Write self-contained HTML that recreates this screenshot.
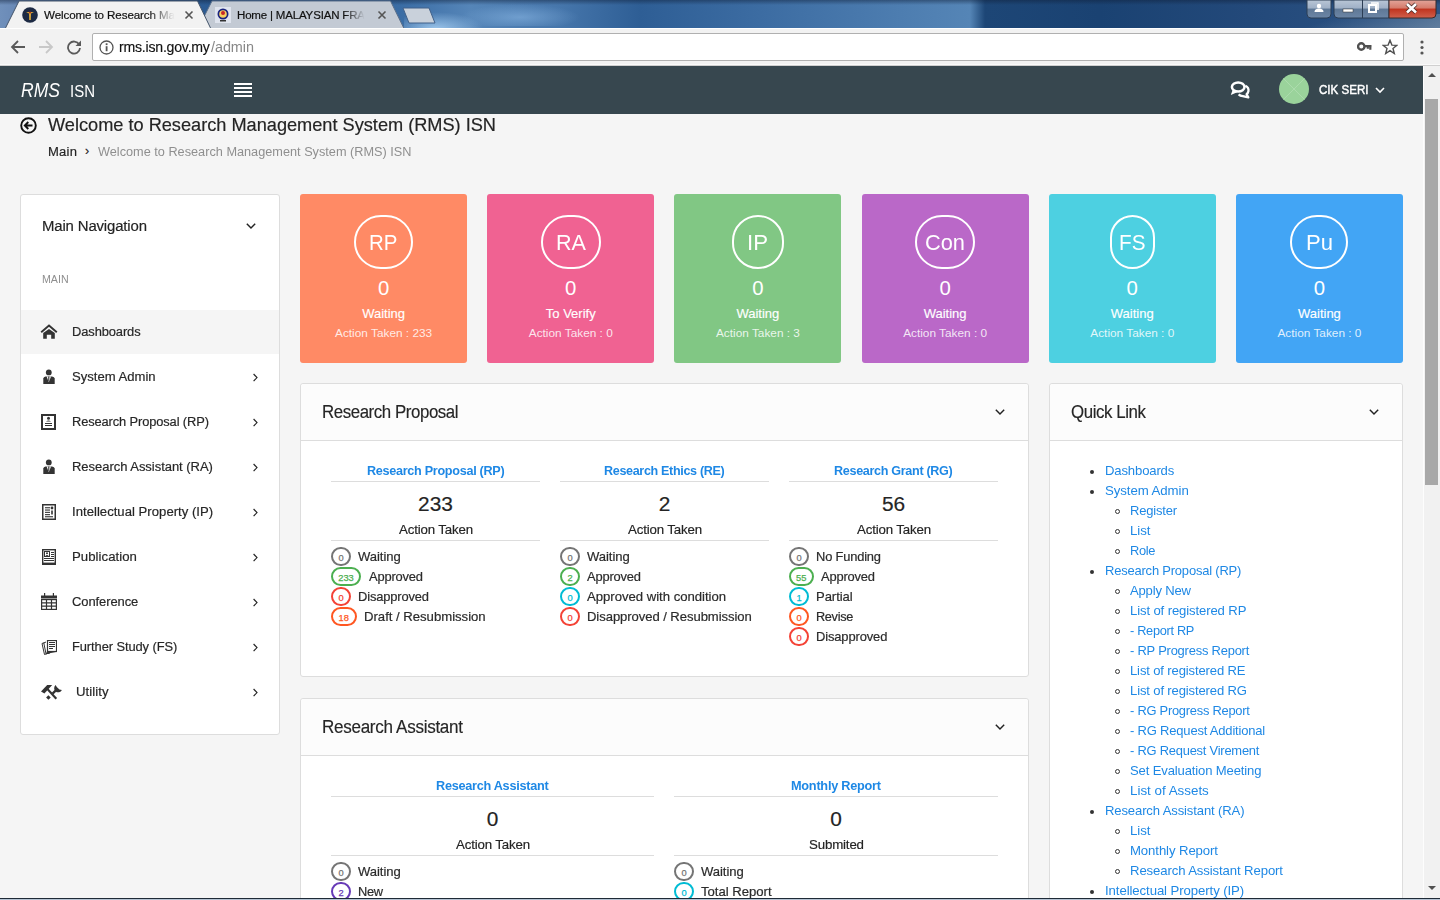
<!DOCTYPE html>
<html><head><meta charset="utf-8"><style>
*{margin:0;padding:0;box-sizing:border-box}
html,body{width:1440px;height:900px;overflow:hidden;background:#f5f5f5;font-family:"Liberation Sans",sans-serif}
.t{position:absolute;white-space:nowrap}
.r{position:absolute}
</style></head><body>
<div class="r" style="left:0px;top:0px;width:1440px;height:29px;background:linear-gradient(90deg,#7090bb 0px,#6585b3 25px,#3a68a0 120px,#2b5a92 210px,#3a6ca4 400px,#5585b8 470px,#4676ab 560px,#2e5e95 640px,#3c6ca2 760px,#4d7db0 900px,#5585b6 970px,#1d4676 985px,#1a4272 1100px,#23497a 1250px,#2e5585 1440px)"></div>
<div class="r" style="left:404px;top:12px;width:80px;height:17px;background:radial-gradient(ellipse at 40% 100%,rgba(170,210,245,.85) 0%,rgba(150,190,230,0) 70%)"></div>
<div class="r" style="left:460px;top:4px;width:120px;height:22px;background:radial-gradient(ellipse at 50% 60%,rgba(140,185,230,.55) 0%,rgba(140,185,230,0) 70%)"></div>
<div class="r" style="left:1250px;top:14px;width:190px;height:15px;background:linear-gradient(160deg,rgba(120,145,170,0) 40%,rgba(120,145,170,.7) 100%)"></div>
<div class="r" style="left:0px;top:0px;width:1440px;height:29px;background:linear-gradient(180deg,rgba(15,30,55,.45) 0px,rgba(0,0,0,0) 5px)"></div>
<svg class="r" style="left:400px;top:6px" width="40" height="20" viewBox="0 0 40 20"><path d="M3 2 L29 2 L35 17 L9 17 Z" fill="#c9d1db" stroke="#41618a" stroke-width="1"/></svg>
<svg class="r" style="left:195px;top:0px" width="215" height="29" viewBox="0 0 215 29"><path d="M3 28.5 L17 1 L195.5 1 L209 28.5 Z" fill="#c3cad4" stroke="#5a6f8a" stroke-width="1"/></svg>
<svg class="r" style="left:0px;top:0px" width="215" height="29" viewBox="0 0 215 29"><path d="M5 29 L19 1 L197.5 1 L211 29 Z" fill="#f2f2f2" stroke="#44556b" stroke-width="1"/></svg>
<svg class="r" style="left:22px;top:7px" width="16" height="16" viewBox="0 0 16 16"><circle cx="8" cy="8" r="7.8" fill="#1d2a44"/><path d="M4 5 L12 5 L9 6.5 L8.8 13 L7.2 13 L7 6.5 Z" fill="#d9a83a"/><circle cx="8" cy="5.5" r="1" fill="#b03020"/></svg>
<div class="t" style="left:44.00px;top:7.80px;font-size:11.83px;line-height:15px;color:#111;letter-spacing:-0.118px;transform:scaleX(0.9821);transform-origin:0 0;-webkit-text-stroke:0.2px #111;-webkit-mask-image:linear-gradient(90deg,#000 80%,transparent 100%)">Welcome to Research Ma</div>
<svg class="r" style="left:184px;top:10px" width="10" height="10" viewBox="0 0 10 10"><path d="M1.5 1.5 L8.5 8.5 M8.5 1.5 L1.5 8.5" stroke="#555" stroke-width="1.6"/></svg>
<svg class="r" style="left:215px;top:7px" width="16" height="16" viewBox="0 0 16 16"><rect x="0" y="0" width="16" height="16" fill="#dfe4ee"/><circle cx="8" cy="7" r="5.5" fill="#1a237e"/><circle cx="8" cy="7" r="3.8" fill="#f5d060"/><circle cx="8" cy="6" r="2" fill="#c62828"/><rect x="5" y="13" width="6" height="1.5" fill="#333"/></svg>
<div class="t" style="left:237.00px;top:7.80px;font-size:11.83px;line-height:15px;color:#111;letter-spacing:-0.189px;transform:scaleX(0.9741);transform-origin:0 0;-webkit-text-stroke:0.2px #111;-webkit-mask-image:linear-gradient(90deg,#000 85%,transparent 100%)">Home | MALAYSIAN FRA</div>
<svg class="r" style="left:377px;top:10px" width="10" height="10" viewBox="0 0 10 10"><path d="M1.5 1.5 L8.5 8.5 M8.5 1.5 L1.5 8.5" stroke="#555" stroke-width="1.6"/></svg>
<svg class="r" style="left:1305px;top:0px" width="135" height="20" viewBox="0 0 135 20"><defs><linearGradient id="wb" x1="0" y1="0" x2="0" y2="1"><stop offset="0" stop-color="#b9c6d6"/><stop offset=".45" stop-color="#9fb0c6"/><stop offset=".5" stop-color="#5f7896"/><stop offset="1" stop-color="#6c86a6"/></linearGradient><linearGradient id="wc" x1="0" y1="0" x2="0" y2="1"><stop offset="0" stop-color="#e3a59a"/><stop offset=".45" stop-color="#d57b6b"/><stop offset=".5" stop-color="#c0341f"/><stop offset="1" stop-color="#d0604c"/></linearGradient></defs><path d="M2 0 L2 14 Q2 18 6 18 L22 18 Q26 18 26 14 L26 0 Z" fill="url(#wb)" stroke="#2c3e55" stroke-width="1"/><path d="M29 0 L29 14 Q29 18 33 18 L84 18 L84 0 Z" fill="url(#wb)" stroke="#2c3e55" stroke-width="1"/><path d="M84 0 L84 18 L127 18 Q131 18 131 14 L131 0 Z" fill="url(#wc)" stroke="#3a2a2a" stroke-width="1"/><line x1="57.5" y1="0" x2="57.5" y2="18" stroke="#2c3e55" stroke-width="1"/><circle cx="14" cy="6" r="2.2" fill="#fff"/><path d="M9.5 12 Q9.5 8.5 14 8.5 Q18.5 8.5 18.5 12 Z" fill="#fff"/><rect x="38" y="9" width="10" height="3" fill="#fff" stroke="#333" stroke-width=".5"/><rect x="64" y="5" width="7" height="7" fill="none" stroke="#fff" stroke-width="2"/><path d="M66 3 L73 3 L73 10" fill="none" stroke="#fff" stroke-width="1.5"/><path d="M102 4 L111 12.5 M111 4 L102 12.5" stroke="#4a2a25" stroke-width="4.2"/><path d="M102 4 L111 12.5 M111 4 L102 12.5" stroke="#fff" stroke-width="2.6"/></svg>
<div class="r" style="left:0px;top:28px;width:1440px;height:37px;background:#f2f2f2;border-top:1px solid #fff"></div>
<div class="r" style="left:0px;top:64px;width:1440px;height:1px;background:#fafafa"></div>
<div class="r" style="left:0px;top:65px;width:1440px;height:1px;background:#d0d0d0"></div>
<svg class="r" style="left:10px;top:39px" width="16" height="16" viewBox="0 0 16 16"><path d="M15 8 L2 8 M8 2 L2 8 L8 14" fill="none" stroke="#5a5a5a" stroke-width="1.8"/></svg>
<svg class="r" style="left:38px;top:39px" width="16" height="16" viewBox="0 0 16 16"><path d="M1 8 L14 8 M8 2 L14 8 L8 14" fill="none" stroke="#c8c8c8" stroke-width="1.8"/></svg>
<svg class="r" style="left:66px;top:39px" width="16" height="16" viewBox="0 0 16 16"><path d="M13.2 5.5 A6 6 0 1 0 14 9" fill="none" stroke="#5a5a5a" stroke-width="1.8"/><path d="M15 1.5 L15 7 L9.5 7 Z" fill="#5a5a5a"/></svg>
<div class="r" style="left:92px;top:33px;width:1312px;height:28px;background:#fff;border:1px solid #b0b0b0;border-radius:2px"></div>
<svg class="r" style="left:99px;top:40px" width="15" height="15" viewBox="0 0 15 15"><circle cx="7.5" cy="7.5" r="6.5" fill="none" stroke="#555" stroke-width="1.3"/><rect x="6.7" y="6.2" width="1.8" height="5" fill="#555"/><rect x="6.7" y="3.3" width="1.8" height="1.8" fill="#555"/></svg>
<div class="t" style="left:119.00px;top:38.00px;font-size:14.55px;line-height:18px;color:#111;letter-spacing:-0.230px;transform:scaleX(0.9701);transform-origin:0 0;-webkit-text-stroke:0.15px #111;">rms.isn.gov.my</div>
<div class="t" style="left:211.00px;top:38.00px;font-size:14.55px;line-height:18px;color:#888;letter-spacing:-0.069px;transform:scaleX(0.9921);transform-origin:0 0;">/admin</div>
<svg class="r" style="left:1357px;top:41px" width="16" height="12" viewBox="0 0 16 12"><circle cx="4.3" cy="5.5" r="3.2" fill="none" stroke="#505050" stroke-width="2.4"/><path d="M7.5 5.2 L14.5 5.2 M13.3 5 L13.3 8.8 M10.8 5 L10.8 7.8" stroke="#505050" stroke-width="2.2"/></svg>
<svg class="r" style="left:1382px;top:39px" width="16" height="16" viewBox="0 0 16 16"><path d="M8 1.3 L9.9 6.1 L14.9 6.3 L11 9.5 L12.3 14.5 L8 11.7 L3.7 14.5 L5 9.5 L1.1 6.3 L6.1 6.1 Z" fill="none" stroke="#505050" stroke-width="1.4" stroke-linejoin="miter"/></svg>
<svg class="r" style="left:1418px;top:40px" width="8" height="16" viewBox="0 0 8 16"><circle cx="4" cy="2" r="1.6" fill="#555"/><circle cx="4" cy="7.5" r="1.6" fill="#555"/><circle cx="4" cy="13" r="1.6" fill="#555"/></svg>
<div class="r" style="left:0px;top:66px;width:1423px;height:48px;background:#37474f"></div>
<div class="t" style="left:21.00px;top:77.50px;font-size:19.4px;line-height:25px;color:#fff;font-style:italic;transform:scaleX(0.9050);transform-origin:0 0;">RMS</div>
<div class="t" style="left:69.50px;top:81.00px;font-size:16.88px;line-height:21px;color:#fff;transform:scaleX(0.8889);transform-origin:0 0;">ISN</div>
<div class="r" style="left:234px;top:83px;width:18px;height:2px;background:#fff"></div>
<div class="r" style="left:234px;top:87px;width:18px;height:2px;background:#fff"></div>
<div class="r" style="left:234px;top:91px;width:18px;height:2px;background:#fff"></div>
<div class="r" style="left:234px;top:95px;width:18px;height:2px;background:#fff"></div>
<svg class="r" style="left:1229px;top:80px" width="22" height="20" viewBox="0 0 22 20"><ellipse cx="9.2" cy="7" rx="6.3" ry="4.6" fill="none" stroke="#fff" stroke-width="2.5"/><path d="M3.6 10 L1.8 15 L8.2 12.2 Z" fill="#fff"/><path d="M16.3 5.8 C18.8 7 19.8 9.3 19.4 11.3 C19.1 12.8 18.3 13.8 17.6 14.3 L19.3 17.4 L13.8 16.2 C12 15.9 10.6 15.2 9.6 14.3" fill="none" stroke="#fff" stroke-width="2.3" stroke-linejoin="round"/></svg>
<svg class="r" style="left:1279px;top:74px" width="30" height="30" viewBox="0 0 30 30"><circle cx="15" cy="15" r="15" fill="#9ad39b"/><path d="M4.4 4.4 L25.6 25.6 M25.6 4.4 L4.4 25.6" stroke="#b5e0b5" stroke-width=".7"/></svg>
<div class="t" style="left:1319.00px;top:81.50px;font-size:12.71px;line-height:16px;color:#fff;transform:scaleX(0.9109);transform-origin:0 0;-webkit-text-stroke:0.45px #fff;">CIK SERI</div>
<svg class="r" style="left:1374px;top:86px" width="12" height="8" viewBox="0 0 12 8"><path d="M2 2 L6 6 L10 2" fill="none" stroke="#fff" stroke-width="1.6"/></svg>
<div class="r" style="left:1423px;top:66px;width:17px;height:832px;background:#f1f1f1;border-left:1px solid #fdfdfd"></div>
<svg class="r" style="left:1426px;top:70px" width="12" height="9" viewBox="0 0 12 9"><path d="M2 7 L6 3 L10 7 Z" fill="#505050"/></svg>
<div class="r" style="left:1425px;top:99px;width:13px;height:386px;background:#a8a8a8"></div>
<svg class="r" style="left:1426px;top:884px" width="12" height="9" viewBox="0 0 12 9"><path d="M2 2 L6 6 L10 2 Z" fill="#505050"/></svg>
<svg class="r" style="left:20px;top:117px" width="17" height="17" viewBox="0 0 17 17"><circle cx="8.5" cy="8.5" r="7.3" fill="none" stroke="#111" stroke-width="1.9"/><path d="M12.5 8.5 L5 8.5 M8.3 5 L4.8 8.5 L8.3 12" fill="none" stroke="#111" stroke-width="1.9"/></svg>
<div class="t" style="left:48.30px;top:113.00px;font-size:18.24px;line-height:23px;color:#242424;letter-spacing:-0.017px;transform:scaleX(0.9982);transform-origin:0 0;-webkit-text-stroke:0.18px #242424;">Welcome to Research Management System (RMS) ISN</div>
<div class="t" style="left:48.00px;top:143.50px;font-size:12.71px;line-height:16px;color:#242424;letter-spacing:0.238px;transform:scaleX(1.0267);transform-origin:0 0;-webkit-text-stroke:0.18px #242424;">Main</div>
<div class="t" style="left:85.00px;top:143.00px;font-size:12.61px;line-height:16px;color:#242424;-webkit-text-stroke:0.18px #242424;">›</div>
<div class="t" style="left:97.60px;top:143.50px;font-size:12.71px;line-height:16px;color:#8f8f8f;letter-spacing:0.003px;transform:scaleX(1.0005);transform-origin:0 0;">Welcome to Research Management System (RMS) ISN</div>
<div class="r" style="left:20px;top:194px;width:260px;height:541px;background:#fff;border:1px solid #ddd;border-radius:3px"></div>
<div class="t" style="left:41.70px;top:216.20px;font-size:15.23px;line-height:19px;color:#242424;letter-spacing:-0.151px;transform:scaleX(0.9810);transform-origin:0 0;-webkit-text-stroke:0.18px #242424;">Main Navigation</div>
<svg class="r" style="left:244px;top:221px" width="14" height="10" viewBox="0 0 14 10"><path d="M2.8 2.8 L7 7 L11.2 2.8" fill="none" stroke="#222" stroke-width="1.45"/></svg>
<div class="t" style="left:41.50px;top:272.00px;font-size:11.45px;line-height:14px;color:#8f8f8f;transform:scaleX(0.9303);transform-origin:0 0;">MAIN</div>
<div class="r" style="left:21px;top:310px;width:258px;height:44px;background:#f5f5f5"></div>
<div class="t" style="left:72.40px;top:323.30px;font-size:13.09px;line-height:17px;color:#242424;letter-spacing:-0.106px;transform:scaleX(0.9867);transform-origin:0 0;-webkit-text-stroke:0.2px #333;">Dashboards</div>
<div class="t" style="left:72.40px;top:368.30px;font-size:13.09px;line-height:17px;color:#242424;letter-spacing:0.003px;transform:scaleX(1.0004);transform-origin:0 0;-webkit-text-stroke:0.2px #333;">System Admin</div>
<svg class="r" style="left:251px;top:372.3px" width="8" height="11" viewBox="0 0 8 11"><path d="M2.6 2 L6 5.6 L2.6 9.2" fill="none" stroke="#222" stroke-width="1.15"/></svg>
<div class="t" style="left:72.40px;top:413.30px;font-size:13.09px;line-height:17px;color:#242424;letter-spacing:-0.117px;transform:scaleX(0.9830);transform-origin:0 0;-webkit-text-stroke:0.2px #333;">Research Proposal (RP)</div>
<svg class="r" style="left:251px;top:417.3px" width="8" height="11" viewBox="0 0 8 11"><path d="M2.6 2 L6 5.6 L2.6 9.2" fill="none" stroke="#222" stroke-width="1.15"/></svg>
<div class="t" style="left:72.30px;top:458.30px;font-size:13.09px;line-height:17px;color:#242424;letter-spacing:-0.036px;transform:scaleX(0.9945);transform-origin:0 0;-webkit-text-stroke:0.2px #333;">Research Assistant (RA)</div>
<svg class="r" style="left:251px;top:462.3px" width="8" height="11" viewBox="0 0 8 11"><path d="M2.6 2 L6 5.6 L2.6 9.2" fill="none" stroke="#222" stroke-width="1.15"/></svg>
<div class="t" style="left:72.30px;top:503.30px;font-size:13.09px;line-height:17px;color:#242424;letter-spacing:0.018px;transform:scaleX(1.0031);transform-origin:0 0;-webkit-text-stroke:0.2px #333;">Intellectual Property (IP)</div>
<svg class="r" style="left:251px;top:507.29999999999995px" width="8" height="11" viewBox="0 0 8 11"><path d="M2.6 2 L6 5.6 L2.6 9.2" fill="none" stroke="#222" stroke-width="1.15"/></svg>
<div class="t" style="left:72.30px;top:548.30px;font-size:13.09px;line-height:17px;color:#242424;letter-spacing:0.048px;transform:scaleX(1.0076);transform-origin:0 0;-webkit-text-stroke:0.2px #333;">Publication</div>
<svg class="r" style="left:251px;top:552.3px" width="8" height="11" viewBox="0 0 8 11"><path d="M2.6 2 L6 5.6 L2.6 9.2" fill="none" stroke="#222" stroke-width="1.15"/></svg>
<div class="t" style="left:72.30px;top:593.30px;font-size:13.09px;line-height:17px;color:#242424;letter-spacing:-0.077px;transform:scaleX(0.9899);transform-origin:0 0;-webkit-text-stroke:0.2px #333;">Conference</div>
<svg class="r" style="left:251px;top:597.3px" width="8" height="11" viewBox="0 0 8 11"><path d="M2.6 2 L6 5.6 L2.6 9.2" fill="none" stroke="#222" stroke-width="1.15"/></svg>
<div class="t" style="left:72.30px;top:638.30px;font-size:13.09px;line-height:17px;color:#242424;letter-spacing:-0.091px;transform:scaleX(0.9859);transform-origin:0 0;-webkit-text-stroke:0.2px #333;">Further Study (FS)</div>
<svg class="r" style="left:251px;top:642.3px" width="8" height="11" viewBox="0 0 8 11"><path d="M2.6 2 L6 5.6 L2.6 9.2" fill="none" stroke="#222" stroke-width="1.15"/></svg>
<div class="t" style="left:76.30px;top:683.30px;font-size:13.09px;line-height:17px;color:#242424;letter-spacing:0.059px;transform:scaleX(1.0112);transform-origin:0 0;-webkit-text-stroke:0.2px #333;">Utility</div>
<svg class="r" style="left:251px;top:687.3px" width="8" height="11" viewBox="0 0 8 11"><path d="M2.6 2 L6 5.6 L2.6 9.2" fill="none" stroke="#222" stroke-width="1.15"/></svg>
<svg class="r" style="left:40px;top:324px" width="18" height="16" viewBox="0 0 18 16"><path d="M1.2 8.2 L9 1.6 L16.8 8.2" fill="none" stroke="#333" stroke-width="1.9" stroke-linejoin="miter"/><path d="M3.2 9 L9 4.9 L14.8 9 L14.8 14.7 L11.2 14.7 L11.2 10.8 L6.8 10.8 L6.8 14.7 L3.2 14.7 Z" fill="#333"/></svg>
<svg class="r" style="left:43px;top:368.5px" width="12" height="15" viewBox="0 0 12 15"><circle cx="5.8" cy="3.4" r="2.9" fill="#333"/><path d="M0.3 15 L0.3 9.6 Q0.5 7.6 2.5 7.4 L9.1 7.4 Q11.5 7.6 11.7 9.6 L11.7 15 Z" fill="#333"/><path d="M3.6 7.4 L5.8 13.2 L8 7.4 Z" fill="#fff"/><path d="M5.2 7.4 L6.4 7.4 L6.3 11.8 L5.8 12.6 L5.3 11.8 Z" fill="#333"/></svg>
<svg class="r" style="left:43px;top:458.5px" width="12" height="15" viewBox="0 0 12 15"><circle cx="5.8" cy="3.4" r="2.9" fill="#333"/><path d="M0.3 15 L0.3 9.6 Q0.5 7.6 2.5 7.4 L9.1 7.4 Q11.5 7.6 11.7 9.6 L11.7 15 Z" fill="#333"/><path d="M3.6 7.4 L5.8 13.2 L8 7.4 Z" fill="#fff"/><path d="M5.2 7.4 L6.4 7.4 L6.3 11.8 L5.8 12.6 L5.3 11.8 Z" fill="#333"/></svg>
<svg class="r" style="left:41px;top:414px" width="15" height="16" viewBox="0 0 15 16"><rect x="1" y="1" width="13" height="14" fill="none" stroke="#333" stroke-width="2"/><circle cx="7.5" cy="4.3" r="1.5" fill="#333"/><path d="M5 7.6 Q7.5 5.2 10 7.6 Z" fill="#333"/><rect x="4" y="9" width="7" height="1" fill="#333"/><rect x="4" y="11" width="7" height="1" fill="#333"/></svg>
<svg class="r" style="left:42px;top:504px" width="14" height="16" viewBox="0 0 14 16"><rect x="0.75" y="0.75" width="12.5" height="14.5" fill="none" stroke="#333" stroke-width="1.5"/><rect x="3" y="3.2" width="5" height="1.1" fill="#333"/><rect x="3" y="5.5" width="5" height="1.1" fill="#333"/><rect x="3" y="7.8" width="5" height="1.1" fill="#333"/><rect x="3" y="10.1" width="5" height="1.1" fill="#333"/><rect x="3" y="12.2" width="8" height="1.1" fill="#333"/><circle cx="10" cy="4" r="1.4" fill="#333"/><rect x="9.2" y="6.5" width="1.6" height="4" fill="#333"/></svg>
<svg class="r" style="left:42px;top:549px" width="14" height="16" viewBox="0 0 14 16"><rect x="0" y="0" width="14" height="1.4" fill="#333"/><rect x="0" y="0" width="1.4" height="16" fill="#333"/><rect x="12.6" y="0" width="1.4" height="16" fill="#333"/><rect x="0" y="13.6" width="14" height="2.4" fill="#333"/><rect x="2.5" y="2.5" width="5" height="5" fill="none" stroke="#333" stroke-width="1"/><circle cx="5" cy="4.3" r="1" fill="#333"/><path d="M3.3 7 Q5 5.2 6.7 7 Z" fill="#333"/><rect x="9" y="3" width="3" height="1" fill="#333"/><rect x="9" y="5" width="3" height="1" fill="#333"/><rect x="9" y="7" width="3" height="1" fill="#333"/><rect x="2" y="9" width="10" height="1" fill="#333"/><rect x="2" y="11" width="10" height="1" fill="#333"/></svg>
<svg class="r" style="left:41px;top:593px" width="16" height="17" viewBox="0 0 16 17"><rect x="0" y="2.5" width="16" height="3" fill="#333"/><rect x="3" y="0" width="1.2" height="4" fill="#333"/><rect x="11.8" y="0" width="1.2" height="4" fill="#333"/><rect x="0.6" y="6.6" width="14.8" height="9.8" fill="none" stroke="#333" stroke-width="1.2"/><path d="M0.6 9.8 L15.4 9.8 M0.6 13.1 L15.4 13.1 M5.5 6.6 L5.5 16.4 M10.5 6.6 L10.5 16.4" stroke="#333" stroke-width="1.2"/></svg>
<svg class="r" style="left:41px;top:640px" width="16" height="15" viewBox="0 0 16 15"><path d="M3.5 2.5 L1 3.5 L3.5 14.5 L8 13" fill="none" stroke="#333" stroke-width="1"/><path d="M5 2 L2.8 3 L5 13.8 L9 13" fill="none" stroke="#333" stroke-width="1"/><rect x="6" y="0" width="10" height="12" fill="#fff"/><rect x="6.5" y="0.5" width="9" height="11" fill="none" stroke="#333" stroke-width="1.2"/><rect x="8" y="2" width="6" height="1" fill="#333"/><rect x="8" y="4" width="6" height="1" fill="#333"/><rect x="8" y="6" width="6" height="1" fill="#333"/><rect x="8" y="8" width="4" height="1" fill="#333"/><path d="M6 11.5 L4.8 14 L15 12 Z" fill="#333"/></svg>
<svg class="r" style="left:36px;top:678px" width="30" height="28" viewBox="0 0 30 28"><path d="M5 13.4 L11.2 7.1 L16.2 7.1 L8.4 15.4 Z" fill="#333"/><path d="M11.2 10.8 L20.3 20.8" stroke="#333" stroke-width="2.1"/><path d="M19.6 7.1 A4.1 4.1 0 1 0 25.9 12.1 L23.4 11.4 L20.8 8.9 Z" fill="#333"/><path d="M19.8 12.4 L16.6 15.6" stroke="#333" stroke-width="2.3"/><path d="M12.4 17.2 L14.7 19.5 L12.4 21.8 L10.1 19.5 Z" fill="#333"/></svg>
<div class="r" style="left:300.0px;top:194px;width:167.17px;height:169px;background:#ff8a65;border-radius:3px"></div>
<div class="r" style="left:354.08px;top:215px;width:59px;height:54px;border:2px solid #fff;border-radius:100px"></div>
<div class="t" style="left:369.38px;top:228.00px;font-size:22.31px;line-height:29px;color:#fff;transform:scaleX(0.9166);transform-origin:0 0;">RP</div>
<div class="t" style="left:377.92px;top:275.00px;font-size:20.37px;line-height:26px;color:#fff;">0</div>
<div class="t" style="left:362.14px;top:305.80px;font-size:13.0px;line-height:16px;color:#fff;-webkit-text-stroke:0.15px #fff;">Waiting</div>
<div class="t" style="left:335.04px;top:325.50px;font-size:11.83px;line-height:15px;color:rgba(255,255,255,.85);">Action Taken : 233</div>
<div class="r" style="left:487.17px;top:194px;width:167.17px;height:169px;background:#f06292;border-radius:3px"></div>
<div class="r" style="left:540.75px;top:215px;width:60px;height:54px;border:2px solid #fff;border-radius:100px"></div>
<div class="t" style="left:555.75px;top:228.00px;font-size:22.31px;line-height:29px;color:#fff;transform:scaleX(0.9682);transform-origin:0 0;">RA</div>
<div class="t" style="left:565.09px;top:275.00px;font-size:20.37px;line-height:26px;color:#fff;">0</div>
<div class="t" style="left:545.82px;top:305.80px;font-size:13.0px;line-height:16px;color:#fff;-webkit-text-stroke:0.15px #fff;">To Verify</div>
<div class="t" style="left:528.79px;top:325.50px;font-size:11.83px;line-height:15px;color:rgba(255,255,255,.85);">Action Taken : 0</div>
<div class="r" style="left:674.34px;top:194px;width:167.17px;height:169px;background:#81c784;border-radius:3px"></div>
<div class="r" style="left:731.9200000000001px;top:215px;width:52px;height:54px;border:2px solid #fff;border-radius:100px"></div>
<div class="t" style="left:747.42px;top:228.00px;font-size:22.31px;line-height:29px;color:#fff;transform:scaleX(0.9970);transform-origin:0 0;">IP</div>
<div class="t" style="left:752.26px;top:275.00px;font-size:20.37px;line-height:26px;color:#fff;">0</div>
<div class="t" style="left:736.48px;top:305.80px;font-size:13.0px;line-height:16px;color:#fff;-webkit-text-stroke:0.15px #fff;">Waiting</div>
<div class="t" style="left:715.96px;top:325.50px;font-size:11.83px;line-height:15px;color:rgba(255,255,255,.85);">Action Taken : 3</div>
<div class="r" style="left:861.51px;top:194px;width:167.17px;height:169px;background:#ba68c8;border-radius:3px"></div>
<div class="r" style="left:915.09px;top:215px;width:60px;height:54px;border:2px solid #fff;border-radius:100px"></div>
<div class="t" style="left:925.09px;top:228.00px;font-size:22.31px;line-height:29px;color:#fff;transform:scaleX(0.9775);transform-origin:0 0;">Con</div>
<div class="t" style="left:939.43px;top:275.00px;font-size:20.37px;line-height:26px;color:#fff;">0</div>
<div class="t" style="left:923.65px;top:305.80px;font-size:13.0px;line-height:16px;color:#fff;-webkit-text-stroke:0.15px #fff;">Waiting</div>
<div class="t" style="left:903.13px;top:325.50px;font-size:11.83px;line-height:15px;color:rgba(255,255,255,.85);">Action Taken : 0</div>
<div class="r" style="left:1048.68px;top:194px;width:167.17px;height:169px;background:#4dd0e1;border-radius:3px"></div>
<div class="r" style="left:1109.51px;top:215px;width:45.5px;height:54px;border:2px solid #fff;border-radius:100px"></div>
<div class="t" style="left:1119.01px;top:228.00px;font-size:22.31px;line-height:29px;color:#fff;transform:scaleX(0.9298);transform-origin:0 0;">FS</div>
<div class="t" style="left:1126.60px;top:275.00px;font-size:20.37px;line-height:26px;color:#fff;">0</div>
<div class="t" style="left:1110.82px;top:305.80px;font-size:13.0px;line-height:16px;color:#fff;-webkit-text-stroke:0.15px #fff;">Waiting</div>
<div class="t" style="left:1090.30px;top:325.50px;font-size:11.83px;line-height:15px;color:rgba(255,255,255,.85);">Action Taken : 0</div>
<div class="r" style="left:1235.85px;top:194px;width:167.17px;height:169px;background:#42a5f5;border-radius:3px"></div>
<div class="r" style="left:1290.4299999999998px;top:215px;width:58px;height:54px;border:2px solid #fff;border-radius:100px"></div>
<div class="t" style="left:1305.93px;top:228.00px;font-size:22.31px;line-height:29px;color:#fff;transform:scaleX(0.9897);transform-origin:0 0;">Pu</div>
<div class="t" style="left:1313.77px;top:275.00px;font-size:20.37px;line-height:26px;color:#fff;">0</div>
<div class="t" style="left:1297.99px;top:305.80px;font-size:13.0px;line-height:16px;color:#fff;-webkit-text-stroke:0.15px #fff;">Waiting</div>
<div class="t" style="left:1277.47px;top:325.50px;font-size:11.83px;line-height:15px;color:rgba(255,255,255,.85);">Action Taken : 0</div>
<div class="r" style="left:300px;top:383px;width:729px;height:294px;background:#fff;border:1px solid #ddd;border-radius:3px"></div>
<div class="r" style="left:301px;top:384px;width:727px;height:57px;background:#fcfcfc;border-bottom:1px solid #ddd;border-radius:3px 3px 0 0"></div>
<div class="t" style="left:321.50px;top:401.00px;font-size:17.65px;line-height:22px;color:#262626;letter-spacing:-0.440px;transform:scaleX(0.9551);transform-origin:0 0;-webkit-text-stroke:0.15px #262626;">Research Proposal</div>
<svg class="r" style="left:993px;top:406.5px" width="14" height="10" viewBox="0 0 14 10"><path d="M2.8 2.8 L7 7 L11.2 2.8" fill="none" stroke="#222" stroke-width="1.45"/></svg>
<div class="t" style="left:366.70px;top:462.10px;font-size:13.19px;line-height:17px;color:#1e88e5;font-weight:bold;letter-spacing:-0.313px;transform:scaleX(0.9580);transform-origin:0 0;">Research Proposal (RP)</div>
<div class="r" style="left:331px;top:480.8px;width:209px;height:1px;background:#ddd"></div>
<div class="t" style="left:418.11px;top:490.00px;font-size:20.86px;line-height:27px;color:#242424;-webkit-text-stroke:0.18px #242424;">233</div>
<div class="t" style="left:398.50px;top:521.30px;font-size:13.58px;line-height:17px;color:#242424;letter-spacing:-0.162px;transform:scaleX(0.9775);transform-origin:0 0;-webkit-text-stroke:0.18px #242424;">Action Taken</div>
<div class="r" style="left:331px;top:540.3px;width:209px;height:1px;background:#ddd"></div>
<div class="r" style="left:331px;top:547.3px;width:20px;height:19px;border:2px solid #757575;border-radius:100px"></div>
<div class="t" style="left:338.41px;top:552.40px;font-size:9.31px;line-height:12px;color:#757575;-webkit-text-stroke:0.25px #757575;">0</div>
<div class="t" style="left:357.50px;top:548.30px;font-size:13.19px;line-height:17px;color:#2b2b2b;letter-spacing:-0.066px;transform:scaleX(0.9910);transform-origin:0 0;-webkit-text-stroke:0.2px #2b2b2b;">Waiting</div>
<div class="r" style="left:331px;top:567.3px;width:30px;height:19px;border:2px solid #4caf50;border-radius:100px"></div>
<div class="t" style="left:338.24px;top:572.40px;font-size:9.31px;line-height:12px;color:#4caf50;-webkit-text-stroke:0.25px #4caf50;">233</div>
<div class="t" style="left:368.50px;top:568.30px;font-size:13.19px;line-height:17px;color:#2b2b2b;letter-spacing:-0.177px;transform:scaleX(0.9785);transform-origin:0 0;-webkit-text-stroke:0.2px #2b2b2b;">Approved</div>
<div class="r" style="left:331px;top:587.3px;width:20px;height:19px;border:2px solid #f44336;border-radius:100px"></div>
<div class="t" style="left:338.41px;top:592.40px;font-size:9.31px;line-height:12px;color:#f44336;-webkit-text-stroke:0.25px #f44336;">0</div>
<div class="t" style="left:357.50px;top:588.30px;font-size:13.19px;line-height:17px;color:#2b2b2b;letter-spacing:-0.154px;transform:scaleX(0.9796);transform-origin:0 0;-webkit-text-stroke:0.2px #2b2b2b;">Disapproved</div>
<div class="r" style="left:331px;top:607.3px;width:25.5px;height:19px;border:2px solid #ff5722;border-radius:100px"></div>
<div class="t" style="left:338.58px;top:612.40px;font-size:9.31px;line-height:12px;color:#ff5722;-webkit-text-stroke:0.25px #ff5722;">18</div>
<div class="t" style="left:364.00px;top:608.30px;font-size:13.19px;line-height:17px;color:#2b2b2b;letter-spacing:-0.020px;transform:scaleX(0.9970);transform-origin:0 0;-webkit-text-stroke:0.2px #2b2b2b;">Draft / Resubmission</div>
<div class="t" style="left:604.15px;top:462.10px;font-size:13.19px;line-height:17px;color:#1e88e5;font-weight:bold;letter-spacing:-0.349px;transform:scaleX(0.9526);transform-origin:0 0;">Research Ethics (RE)</div>
<div class="r" style="left:560px;top:480.8px;width:209px;height:1px;background:#ddd"></div>
<div class="t" style="left:658.70px;top:490.00px;font-size:20.86px;line-height:27px;color:#242424;-webkit-text-stroke:0.18px #242424;">2</div>
<div class="t" style="left:627.50px;top:521.30px;font-size:13.58px;line-height:17px;color:#242424;letter-spacing:-0.162px;transform:scaleX(0.9775);transform-origin:0 0;-webkit-text-stroke:0.18px #242424;">Action Taken</div>
<div class="r" style="left:560px;top:540.3px;width:209px;height:1px;background:#ddd"></div>
<div class="r" style="left:560px;top:547.3px;width:20px;height:19px;border:2px solid #757575;border-radius:100px"></div>
<div class="t" style="left:567.41px;top:552.40px;font-size:9.31px;line-height:12px;color:#757575;-webkit-text-stroke:0.25px #757575;">0</div>
<div class="t" style="left:586.50px;top:548.30px;font-size:13.19px;line-height:17px;color:#2b2b2b;letter-spacing:-0.066px;transform:scaleX(0.9910);transform-origin:0 0;-webkit-text-stroke:0.2px #2b2b2b;">Waiting</div>
<div class="r" style="left:560px;top:567.3px;width:20px;height:19px;border:2px solid #4caf50;border-radius:100px"></div>
<div class="t" style="left:567.41px;top:572.40px;font-size:9.31px;line-height:12px;color:#4caf50;-webkit-text-stroke:0.25px #4caf50;">2</div>
<div class="t" style="left:586.50px;top:568.30px;font-size:13.19px;line-height:17px;color:#2b2b2b;letter-spacing:-0.177px;transform:scaleX(0.9785);transform-origin:0 0;-webkit-text-stroke:0.2px #2b2b2b;">Approved</div>
<div class="r" style="left:560px;top:587.3px;width:20px;height:19px;border:2px solid #00bcd4;border-radius:100px"></div>
<div class="t" style="left:567.41px;top:592.40px;font-size:9.31px;line-height:12px;color:#00bcd4;-webkit-text-stroke:0.25px #00bcd4;">0</div>
<div class="t" style="left:586.50px;top:588.30px;font-size:13.19px;line-height:17px;color:#2b2b2b;letter-spacing:-0.022px;transform:scaleX(0.9966);transform-origin:0 0;-webkit-text-stroke:0.2px #2b2b2b;">Approved with condition</div>
<div class="r" style="left:560px;top:607.3px;width:20px;height:19px;border:2px solid #f44336;border-radius:100px"></div>
<div class="t" style="left:567.41px;top:612.40px;font-size:9.31px;line-height:12px;color:#f44336;-webkit-text-stroke:0.25px #f44336;">0</div>
<div class="t" style="left:586.50px;top:608.30px;font-size:13.19px;line-height:17px;color:#2b2b2b;letter-spacing:-0.063px;transform:scaleX(0.9908);transform-origin:0 0;-webkit-text-stroke:0.2px #2b2b2b;">Disapproved / Resubmission</div>
<div class="t" style="left:834.15px;top:462.10px;font-size:13.19px;line-height:17px;color:#1e88e5;font-weight:bold;letter-spacing:-0.340px;transform:scaleX(0.9552);transform-origin:0 0;">Research Grant (RG)</div>
<div class="r" style="left:789px;top:480.8px;width:209px;height:1px;background:#ddd"></div>
<div class="t" style="left:881.91px;top:490.00px;font-size:20.86px;line-height:27px;color:#242424;-webkit-text-stroke:0.18px #242424;">56</div>
<div class="t" style="left:856.50px;top:521.30px;font-size:13.58px;line-height:17px;color:#242424;letter-spacing:-0.162px;transform:scaleX(0.9775);transform-origin:0 0;-webkit-text-stroke:0.18px #242424;">Action Taken</div>
<div class="r" style="left:789px;top:540.3px;width:209px;height:1px;background:#ddd"></div>
<div class="r" style="left:789px;top:547.3px;width:20px;height:19px;border:2px solid #757575;border-radius:100px"></div>
<div class="t" style="left:796.41px;top:552.40px;font-size:9.31px;line-height:12px;color:#757575;-webkit-text-stroke:0.25px #757575;">0</div>
<div class="t" style="left:815.50px;top:548.30px;font-size:13.19px;line-height:17px;color:#2b2b2b;letter-spacing:-0.180px;transform:scaleX(0.9768);transform-origin:0 0;-webkit-text-stroke:0.2px #2b2b2b;">No Funding</div>
<div class="r" style="left:789px;top:567.3px;width:24.5px;height:19px;border:2px solid #4caf50;border-radius:100px"></div>
<div class="t" style="left:796.08px;top:572.40px;font-size:9.31px;line-height:12px;color:#4caf50;-webkit-text-stroke:0.25px #4caf50;">55</div>
<div class="t" style="left:821.00px;top:568.30px;font-size:13.19px;line-height:17px;color:#2b2b2b;letter-spacing:-0.177px;transform:scaleX(0.9785);transform-origin:0 0;-webkit-text-stroke:0.2px #2b2b2b;">Approved</div>
<div class="r" style="left:789px;top:587.3px;width:20px;height:19px;border:2px solid #00bcd4;border-radius:100px"></div>
<div class="t" style="left:796.41px;top:592.40px;font-size:9.31px;line-height:12px;color:#00bcd4;-webkit-text-stroke:0.25px #00bcd4;">1</div>
<div class="t" style="left:815.50px;top:588.30px;font-size:13.19px;line-height:17px;color:#2b2b2b;letter-spacing:-0.057px;transform:scaleX(0.9910);transform-origin:0 0;-webkit-text-stroke:0.2px #2b2b2b;">Partial</div>
<div class="r" style="left:789px;top:607.3px;width:20px;height:19px;border:2px solid #ff5722;border-radius:100px"></div>
<div class="t" style="left:796.41px;top:612.40px;font-size:9.31px;line-height:12px;color:#ff5722;-webkit-text-stroke:0.25px #ff5722;">0</div>
<div class="t" style="left:815.50px;top:608.30px;font-size:13.19px;line-height:17px;color:#2b2b2b;letter-spacing:-0.313px;transform:scaleX(0.9626);transform-origin:0 0;-webkit-text-stroke:0.2px #2b2b2b;">Revise</div>
<div class="r" style="left:789px;top:627.3px;width:20px;height:19px;border:2px solid #f44336;border-radius:100px"></div>
<div class="t" style="left:796.41px;top:632.40px;font-size:9.31px;line-height:12px;color:#f44336;-webkit-text-stroke:0.25px #f44336;">0</div>
<div class="t" style="left:815.50px;top:628.30px;font-size:13.19px;line-height:17px;color:#2b2b2b;letter-spacing:-0.138px;transform:scaleX(0.9817);transform-origin:0 0;-webkit-text-stroke:0.2px #2b2b2b;">Disapproved</div>
<div class="r" style="left:300px;top:698px;width:729px;height:240px;background:#fff;border:1px solid #ddd;border-radius:3px"></div>
<div class="r" style="left:301px;top:699px;width:727px;height:57px;background:#fcfcfc;border-bottom:1px solid #ddd;border-radius:3px 3px 0 0"></div>
<div class="t" style="left:321.50px;top:715.50px;font-size:17.65px;line-height:22px;color:#262626;letter-spacing:-0.306px;transform:scaleX(0.9667);transform-origin:0 0;-webkit-text-stroke:0.15px #262626;">Research Assistant</div>
<svg class="r" style="left:993px;top:721.5px" width="14" height="10" viewBox="0 0 14 10"><path d="M2.8 2.8 L7 7 L11.2 2.8" fill="none" stroke="#222" stroke-width="1.45"/></svg>
<div class="t" style="left:436.20px;top:776.80px;font-size:13.19px;line-height:17px;color:#1e88e5;font-weight:bold;letter-spacing:-0.284px;transform:scaleX(0.9619);transform-origin:0 0;">Research Assistant</div>
<div class="r" style="left:331px;top:795.5px;width:323px;height:1px;background:#ddd"></div>
<div class="t" style="left:486.70px;top:804.70px;font-size:20.86px;line-height:27px;color:#242424;-webkit-text-stroke:0.18px #242424;">0</div>
<div class="t" style="left:455.50px;top:836.00px;font-size:13.58px;line-height:17px;color:#242424;letter-spacing:-0.162px;transform:scaleX(0.9775);transform-origin:0 0;-webkit-text-stroke:0.18px #242424;">Action Taken</div>
<div class="r" style="left:331px;top:855px;width:323px;height:1px;background:#ddd"></div>
<div class="r" style="left:331px;top:862.0px;width:20px;height:19px;border:2px solid #757575;border-radius:100px"></div>
<div class="t" style="left:338.41px;top:867.10px;font-size:9.31px;line-height:12px;color:#757575;-webkit-text-stroke:0.25px #757575;">0</div>
<div class="t" style="left:357.50px;top:863.00px;font-size:13.19px;line-height:17px;color:#2b2b2b;letter-spacing:-0.066px;transform:scaleX(0.9910);transform-origin:0 0;-webkit-text-stroke:0.2px #2b2b2b;">Waiting</div>
<div class="r" style="left:331px;top:882.0px;width:20px;height:19px;border:2px solid #673ab7;border-radius:100px"></div>
<div class="t" style="left:338.41px;top:887.10px;font-size:9.31px;line-height:12px;color:#673ab7;-webkit-text-stroke:0.25px #673ab7;">2</div>
<div class="t" style="left:357.50px;top:883.00px;font-size:13.19px;line-height:17px;color:#2b2b2b;letter-spacing:-0.357px;transform:scaleX(0.9737);transform-origin:0 0;-webkit-text-stroke:0.2px #2b2b2b;">New</div>
<div class="t" style="left:791.00px;top:776.80px;font-size:13.19px;line-height:17px;color:#1e88e5;font-weight:bold;letter-spacing:-0.267px;transform:scaleX(0.9653);transform-origin:0 0;">Monthly Report</div>
<div class="r" style="left:674px;top:795.5px;width:324px;height:1px;background:#ddd"></div>
<div class="t" style="left:830.20px;top:804.70px;font-size:20.86px;line-height:27px;color:#242424;-webkit-text-stroke:0.18px #242424;">0</div>
<div class="t" style="left:808.50px;top:836.00px;font-size:13.58px;line-height:17px;color:#242424;letter-spacing:-0.171px;transform:scaleX(0.9796);transform-origin:0 0;-webkit-text-stroke:0.18px #242424;">Submited</div>
<div class="r" style="left:674px;top:855px;width:324px;height:1px;background:#ddd"></div>
<div class="r" style="left:674px;top:862.0px;width:20px;height:19px;border:2px solid #757575;border-radius:100px"></div>
<div class="t" style="left:681.41px;top:867.10px;font-size:9.31px;line-height:12px;color:#757575;-webkit-text-stroke:0.25px #757575;">0</div>
<div class="t" style="left:700.50px;top:863.00px;font-size:13.19px;line-height:17px;color:#2b2b2b;letter-spacing:-0.066px;transform:scaleX(0.9910);transform-origin:0 0;-webkit-text-stroke:0.2px #2b2b2b;">Waiting</div>
<div class="r" style="left:674px;top:882.0px;width:20px;height:19px;border:2px solid #00bcd4;border-radius:100px"></div>
<div class="t" style="left:681.41px;top:887.10px;font-size:9.31px;line-height:12px;color:#00bcd4;-webkit-text-stroke:0.25px #00bcd4;">0</div>
<div class="t" style="left:700.50px;top:883.00px;font-size:13.19px;line-height:17px;color:#2b2b2b;letter-spacing:-0.026px;transform:scaleX(0.9960);transform-origin:0 0;-webkit-text-stroke:0.2px #2b2b2b;">Total Report</div>
<div class="r" style="left:1049px;top:383px;width:354px;height:600px;background:#fff;border:1px solid #ddd;border-radius:3px"></div>
<div class="r" style="left:1050px;top:384px;width:352px;height:57px;background:#fcfcfc;border-bottom:1px solid #ddd;border-radius:3px 3px 0 0"></div>
<div class="t" style="left:1070.50px;top:400.50px;font-size:17.65px;line-height:22px;color:#262626;letter-spacing:-0.430px;transform:scaleX(0.9551);transform-origin:0 0;-webkit-text-stroke:0.15px #262626;">Quick Link</div>
<svg class="r" style="left:1367px;top:406.5px" width="14" height="10" viewBox="0 0 14 10"><path d="M2.8 2.8 L7 7 L11.2 2.8" fill="none" stroke="#222" stroke-width="1.45"/></svg>
<div class="r" style="left:1090px;top:469.5px;width:4px;height:4px;background:#333;border-radius:50%"></div>
<div class="t" style="left:1105.00px;top:462.00px;font-size:13.39px;line-height:17px;color:#1e88e5;letter-spacing:-0.159px;transform:scaleX(0.9805);transform-origin:0 0;">Dashboards</div>
<div class="r" style="left:1090px;top:489.5px;width:4px;height:4px;background:#333;border-radius:50%"></div>
<div class="t" style="left:1105.00px;top:482.00px;font-size:13.39px;line-height:17px;color:#1e88e5;letter-spacing:-0.077px;transform:scaleX(0.9901);transform-origin:0 0;">System Admin</div>
<div class="r" style="left:1115px;top:509px;width:5px;height:5px;border:1.2px solid #333;border-radius:50%"></div>
<div class="t" style="left:1130.00px;top:502.00px;font-size:13.39px;line-height:17px;color:#1e88e5;letter-spacing:-0.206px;transform:scaleX(0.9719);transform-origin:0 0;">Register</div>
<div class="r" style="left:1115px;top:529px;width:5px;height:5px;border:1.2px solid #333;border-radius:50%"></div>
<div class="t" style="left:1130.00px;top:522.00px;font-size:13.39px;line-height:17px;color:#1e88e5;letter-spacing:-0.052px;transform:scaleX(0.9925);transform-origin:0 0;">List</div>
<div class="r" style="left:1115px;top:549px;width:5px;height:5px;border:1.2px solid #333;border-radius:50%"></div>
<div class="t" style="left:1130.00px;top:542.00px;font-size:13.39px;line-height:17px;color:#1e88e5;letter-spacing:-0.364px;transform:scaleX(0.9618);transform-origin:0 0;">Role</div>
<div class="r" style="left:1090px;top:569.5px;width:4px;height:4px;background:#333;border-radius:50%"></div>
<div class="t" style="left:1105.00px;top:562.00px;font-size:13.39px;line-height:17px;color:#1e88e5;letter-spacing:-0.212px;transform:scaleX(0.9702);transform-origin:0 0;">Research Proposal (RP)</div>
<div class="r" style="left:1115px;top:589px;width:5px;height:5px;border:1.2px solid #333;border-radius:50%"></div>
<div class="t" style="left:1130.00px;top:582.00px;font-size:13.39px;line-height:17px;color:#1e88e5;letter-spacing:-0.187px;transform:scaleX(0.9771);transform-origin:0 0;">Apply New</div>
<div class="r" style="left:1115px;top:609px;width:5px;height:5px;border:1.2px solid #333;border-radius:50%"></div>
<div class="t" style="left:1130.00px;top:602.00px;font-size:13.39px;line-height:17px;color:#1e88e5;letter-spacing:-0.122px;transform:scaleX(0.9803);transform-origin:0 0;">List of registered RP</div>
<div class="r" style="left:1115px;top:629px;width:5px;height:5px;border:1.2px solid #333;border-radius:50%"></div>
<div class="t" style="left:1130.00px;top:622.00px;font-size:13.39px;line-height:17px;color:#1e88e5;letter-spacing:-0.325px;transform:scaleX(0.9560);transform-origin:0 0;">- Report RP</div>
<div class="r" style="left:1115px;top:649px;width:5px;height:5px;border:1.2px solid #333;border-radius:50%"></div>
<div class="t" style="left:1130.00px;top:642.00px;font-size:13.39px;line-height:17px;color:#1e88e5;letter-spacing:-0.226px;transform:scaleX(0.9674);transform-origin:0 0;">- RP Progress Report</div>
<div class="r" style="left:1115px;top:669px;width:5px;height:5px;border:1.2px solid #333;border-radius:50%"></div>
<div class="t" style="left:1130.00px;top:662.00px;font-size:13.39px;line-height:17px;color:#1e88e5;letter-spacing:-0.145px;transform:scaleX(0.9766);transform-origin:0 0;">List of registered RE</div>
<div class="r" style="left:1115px;top:689px;width:5px;height:5px;border:1.2px solid #333;border-radius:50%"></div>
<div class="t" style="left:1130.00px;top:682.00px;font-size:13.39px;line-height:17px;color:#1e88e5;letter-spacing:-0.145px;transform:scaleX(0.9769);transform-origin:0 0;">List of registered RG</div>
<div class="r" style="left:1115px;top:709px;width:5px;height:5px;border:1.2px solid #333;border-radius:50%"></div>
<div class="t" style="left:1130.00px;top:702.00px;font-size:13.39px;line-height:17px;color:#1e88e5;letter-spacing:-0.257px;transform:scaleX(0.9635);transform-origin:0 0;">- RG Progress Report</div>
<div class="r" style="left:1115px;top:729px;width:5px;height:5px;border:1.2px solid #333;border-radius:50%"></div>
<div class="t" style="left:1130.00px;top:722.00px;font-size:13.39px;line-height:17px;color:#1e88e5;letter-spacing:-0.194px;transform:scaleX(0.9711);transform-origin:0 0;">- RG Request Additional</div>
<div class="r" style="left:1115px;top:749px;width:5px;height:5px;border:1.2px solid #333;border-radius:50%"></div>
<div class="t" style="left:1130.00px;top:742.00px;font-size:13.39px;line-height:17px;color:#1e88e5;letter-spacing:-0.242px;transform:scaleX(0.9663);transform-origin:0 0;">- RG Request Virement</div>
<div class="r" style="left:1115px;top:769px;width:5px;height:5px;border:1.2px solid #333;border-radius:50%"></div>
<div class="t" style="left:1130.00px;top:762.00px;font-size:13.39px;line-height:17px;color:#1e88e5;letter-spacing:-0.150px;transform:scaleX(0.9777);transform-origin:0 0;">Set Evaluation Meeting</div>
<div class="r" style="left:1115px;top:789px;width:5px;height:5px;border:1.2px solid #333;border-radius:50%"></div>
<div class="t" style="left:1130.00px;top:782.00px;font-size:13.39px;line-height:17px;color:#1e88e5;letter-spacing:-0.000px;transform:scaleX(0.9999);transform-origin:0 0;">List of Assets</div>
<div class="r" style="left:1090px;top:809.5px;width:4px;height:4px;background:#333;border-radius:50%"></div>
<div class="t" style="left:1105.00px;top:802.00px;font-size:13.39px;line-height:17px;color:#1e88e5;letter-spacing:-0.144px;transform:scaleX(0.9788);transform-origin:0 0;">Research Assistant (RA)</div>
<div class="r" style="left:1115px;top:829px;width:5px;height:5px;border:1.2px solid #333;border-radius:50%"></div>
<div class="t" style="left:1130.00px;top:822.00px;font-size:13.39px;line-height:17px;color:#1e88e5;letter-spacing:-0.052px;transform:scaleX(0.9925);transform-origin:0 0;">List</div>
<div class="r" style="left:1115px;top:849px;width:5px;height:5px;border:1.2px solid #333;border-radius:50%"></div>
<div class="t" style="left:1130.00px;top:842.00px;font-size:13.39px;line-height:17px;color:#1e88e5;letter-spacing:-0.105px;transform:scaleX(0.9852);transform-origin:0 0;">Monthly Report</div>
<div class="r" style="left:1115px;top:869px;width:5px;height:5px;border:1.2px solid #333;border-radius:50%"></div>
<div class="t" style="left:1130.00px;top:862.00px;font-size:13.39px;line-height:17px;color:#1e88e5;letter-spacing:-0.113px;transform:scaleX(0.9831);transform-origin:0 0;">Research Assistant Report</div>
<div class="r" style="left:1090px;top:889.5px;width:4px;height:4px;background:#333;border-radius:50%"></div>
<div class="t" style="left:1105.00px;top:882.00px;font-size:13.39px;line-height:17px;color:#1e88e5;letter-spacing:-0.087px;transform:scaleX(0.9851);transform-origin:0 0;">Intellectual Property (IP)</div>
<div class="r" style="left:0px;top:898px;width:1440px;height:2px;background:#b4c2d2;border-top:1px solid #1e2a36"></div>
</body></html>
